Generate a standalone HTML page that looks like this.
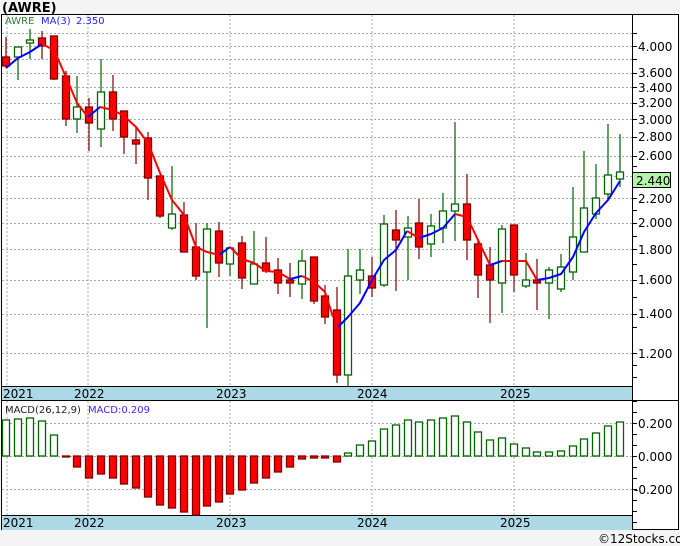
<!DOCTYPE html>
<html><head><meta charset="utf-8"><style>
html,body{margin:0;padding:0;background:#f4f4f4;}
svg{display:block;font-family:"DejaVu Sans","Liberation Sans",sans-serif;}
.g line{stroke:#006400;stroke-width:1.2}
.g rect{fill:#fff;stroke:#006400;stroke-width:1.3}
.r line{stroke:#800000;stroke-width:1.2}
.r rect{fill:#ff0000;stroke:#800000;stroke-width:1.3}
.grid{stroke:#aaa;stroke-width:1;stroke-dasharray:2,2}
.ax{font-size:12px;fill:#000}
</style></head><body>
<svg width="680" height="546" viewBox="0 0 680 546" xmlns="http://www.w3.org/2000/svg">
<rect x="0" y="0" width="680" height="546" fill="#f4f4f4"/>
<text x="2" y="12" font-size="13" font-weight="bold" fill="#000">(AWRE)</text>
<rect x="1.5" y="14.5" width="677" height="515" fill="#fff" stroke="#000"/>
<rect x="2" y="387" width="630" height="13" fill="#add8e6"/>
<rect x="2" y="515" width="630" height="15" fill="#add8e6"/>
<line x1="2" y1="386.5" x2="632" y2="386.5" stroke="#000"/>
<line x1="2" y1="400.5" x2="679" y2="400.5" stroke="#000"/>
<line x1="2" y1="515.5" x2="632" y2="515.5" stroke="#000"/>
<line x1="632.5" y1="14" x2="632.5" y2="530" stroke="#000"/>
<g class="ax"><text x="3" y="398">2021</text><text x="74" y="398">2022</text><text x="216" y="398">2023</text><text x="357" y="398">2024</text><text x="500" y="398">2025</text>
<text x="3" y="527">2021</text><text x="74" y="527">2022</text><text x="216" y="527">2023</text><text x="357" y="527">2024</text><text x="500" y="527">2025</text></g>
<g class="grid">
<line x1="7" y1="15" x2="7" y2="386"/><line x1="88" y1="15" x2="88" y2="386"/><line x1="230" y1="15" x2="230" y2="386"/><line x1="372" y1="15" x2="372" y2="386"/><line x1="514" y1="15" x2="514" y2="386"/>
<line x1="7" y1="401" x2="7" y2="515"/><line x1="88" y1="401" x2="88" y2="515"/><line x1="230" y1="401" x2="230" y2="515"/><line x1="372" y1="401" x2="372" y2="515"/><line x1="514" y1="401" x2="514" y2="515"/>
<line x1="2" y1="33.5" x2="632" y2="33.5"/><line x1="2" y1="46.5" x2="632" y2="46.5"/><line x1="2" y1="59.5" x2="632" y2="59.5"/><line x1="2" y1="73.5" x2="632" y2="73.5"/><line x1="2" y1="87.5" x2="632" y2="87.5"/><line x1="2" y1="103.5" x2="632" y2="103.5"/><line x1="2" y1="119.5" x2="632" y2="119.5"/><line x1="2" y1="137.5" x2="632" y2="137.5"/><line x1="2" y1="156.5" x2="632" y2="156.5"/><line x1="2" y1="176.5" x2="632" y2="176.5"/><line x1="2" y1="198.5" x2="632" y2="198.5"/><line x1="2" y1="223.5" x2="632" y2="223.5"/><line x1="2" y1="249.5" x2="632" y2="249.5"/><line x1="2" y1="280.5" x2="632" y2="280.5"/><line x1="2" y1="314.5" x2="632" y2="314.5"/><line x1="2" y1="353.5" x2="632" y2="353.5"/>
<line x1="2" y1="423.5" x2="632" y2="423.5"/><line x1="2" y1="456.5" x2="632" y2="456.5"/><line x1="2" y1="489.5" x2="632" y2="489.5"/>
</g>
<g stroke="#000">
<line x1="632" y1="33.5" x2="637" y2="33.5"/><line x1="632" y1="46.5" x2="637" y2="46.5"/><line x1="632" y1="59.5" x2="637" y2="59.5"/><line x1="632" y1="73.5" x2="637" y2="73.5"/><line x1="632" y1="87.5" x2="637" y2="87.5"/><line x1="632" y1="103.5" x2="637" y2="103.5"/><line x1="632" y1="119.5" x2="637" y2="119.5"/><line x1="632" y1="137.5" x2="637" y2="137.5"/><line x1="632" y1="156.5" x2="637" y2="156.5"/><line x1="632" y1="166.5" x2="637" y2="166.5"/><line x1="632" y1="187.5" x2="637" y2="187.5"/><line x1="632" y1="198.5" x2="637" y2="198.5"/><line x1="632" y1="210.5" x2="637" y2="210.5"/><line x1="632" y1="223.5" x2="637" y2="223.5"/><line x1="632" y1="236.5" x2="637" y2="236.5"/><line x1="632" y1="249.5" x2="637" y2="249.5"/><line x1="632" y1="264.5" x2="637" y2="264.5"/><line x1="632" y1="280.5" x2="637" y2="280.5"/><line x1="632" y1="297.5" x2="637" y2="297.5"/><line x1="632" y1="314.5" x2="637" y2="314.5"/><line x1="632" y1="327.5" x2="637" y2="327.5"/><line x1="632" y1="353.5" x2="637" y2="353.5"/><line x1="632" y1="365.5" x2="637" y2="365.5"/><line x1="632" y1="377.5" x2="637" y2="377.5"/>
<line x1="632" y1="401.5" x2="637" y2="401.5"/><line x1="632" y1="412.5" x2="637" y2="412.5"/><line x1="632" y1="423.5" x2="637" y2="423.5"/><line x1="632" y1="434.5" x2="637" y2="434.5"/><line x1="632" y1="445.5" x2="637" y2="445.5"/><line x1="632" y1="456.5" x2="637" y2="456.5"/><line x1="632" y1="467.5" x2="637" y2="467.5"/><line x1="632" y1="478.5" x2="637" y2="478.5"/><line x1="632" y1="489.5" x2="637" y2="489.5"/><line x1="632" y1="500.5" x2="637" y2="500.5"/><line x1="632" y1="511.5" x2="637" y2="511.5"/><line x1="632" y1="522.5" x2="637" y2="522.5"/>
</g>
<g class="ax">
<text x="638" y="51">4.000</text><text x="638" y="77">3.600</text><text x="638" y="92">3.400</text><text x="638" y="107">3.200</text><text x="638" y="124">3.000</text><text x="638" y="141">2.800</text><text x="638" y="160">2.600</text><text x="638" y="203">2.200</text><text x="638" y="227">2.000</text><text x="638" y="254">1.800</text><text x="638" y="284">1.600</text><text x="638" y="318">1.400</text><text x="638" y="358">1.200</text>
<text x="638" y="428">0.200</text><text x="638" y="461">0.000</text><text x="634" y="494">-0.200</text>
</g>
<rect x="632.5" y="172.5" width="38" height="15" fill="#b3f5a8" stroke="#000"/>
<text x="636" y="185" font-size="12" fill="#000">2.440</text>
<text x="5" y="24" font-size="10" fill="#2e7d32">AWRE</text>
<text x="41" y="24" font-size="10" fill="#2222ff">MA(3)</text>
<text x="76" y="24" font-size="10" fill="#2222ff">2.350</text>
<text x="5" y="413" font-size="10" fill="#222">MACD(26,12,9)</text>
<text x="88" y="413" font-size="10" fill="#4422ff">MACD:0.209</text>
<g class="r"><line x1="6" y1="37" x2="6" y2="68"/><rect x="2.5" y="57" width="7" height="9"/></g>
<g class="g"><line x1="18" y1="47" x2="18" y2="80"/><rect x="14.5" y="47" width="7" height="10"/></g>
<g class="g"><line x1="30" y1="29" x2="30" y2="59"/><rect x="26.5" y="40" width="7" height="3"/></g>
<g class="r"><line x1="42" y1="31" x2="42" y2="59"/><rect x="38.5" y="38" width="7" height="8"/></g>
<g class="r"><line x1="54" y1="36" x2="54" y2="80"/><rect x="50.5" y="36" width="7" height="43"/></g>
<g class="r"><line x1="66" y1="71" x2="66" y2="126"/><rect x="62.5" y="76" width="7" height="43"/></g>
<g class="g"><line x1="77" y1="76" x2="77" y2="133"/><rect x="73.5" y="107" width="7" height="12"/></g>
<g class="r"><line x1="89" y1="98" x2="89" y2="151"/><rect x="85.5" y="107" width="7" height="16"/></g>
<g class="g"><line x1="101" y1="59" x2="101" y2="147"/><rect x="97.5" y="92" width="7" height="37"/></g>
<g class="r"><line x1="113" y1="75" x2="113" y2="131"/><rect x="109.5" y="92" width="7" height="27"/></g>
<g class="r"><line x1="124" y1="111" x2="124" y2="154"/><rect x="120.5" y="111" width="7" height="26"/></g>
<g class="r"><line x1="136" y1="126" x2="136" y2="164"/><rect x="132.5" y="140" width="7" height="4"/></g>
<g class="r"><line x1="148" y1="132" x2="148" y2="200"/><rect x="144.5" y="138" width="7" height="40"/></g>
<g class="r"><line x1="160" y1="176" x2="160" y2="218"/><rect x="156.5" y="176" width="7" height="40"/></g>
<g class="g"><line x1="172" y1="166" x2="172" y2="230"/><rect x="168.5" y="214" width="7" height="14"/></g>
<g class="r"><line x1="184" y1="202" x2="184" y2="252"/><rect x="180.5" y="215" width="7" height="37"/></g>
<g class="r"><line x1="196" y1="223" x2="196" y2="280"/><rect x="192.5" y="247" width="7" height="29"/></g>
<g class="g"><line x1="207" y1="223" x2="207" y2="328"/><rect x="203.5" y="229" width="7" height="43"/></g>
<g class="r"><line x1="219" y1="222" x2="219" y2="277"/><rect x="215.5" y="231" width="7" height="32"/></g>
<g class="g"><line x1="230" y1="247" x2="230" y2="276"/><rect x="226.5" y="248" width="7" height="16"/></g>
<g class="r"><line x1="242" y1="236" x2="242" y2="289"/><rect x="238.5" y="243" width="7" height="35"/></g>
<g class="g"><line x1="254" y1="231" x2="254" y2="284"/><rect x="250.5" y="264" width="7" height="20"/></g>
<g class="r"><line x1="266" y1="237" x2="266" y2="273"/><rect x="262.5" y="263" width="7" height="8"/></g>
<g class="r"><line x1="278" y1="258" x2="278" y2="294"/><rect x="274.5" y="270" width="7" height="13"/></g>
<g class="r"><line x1="290" y1="263" x2="290" y2="297"/><rect x="286.5" y="280" width="7" height="3"/></g>
<g class="g"><line x1="302" y1="250" x2="302" y2="299"/><rect x="298.5" y="261" width="7" height="23"/></g>
<g class="r"><line x1="314" y1="257" x2="314" y2="304"/><rect x="310.5" y="257" width="7" height="44"/></g>
<g class="r"><line x1="325" y1="285" x2="325" y2="324"/><rect x="321.5" y="296" width="7" height="21"/></g>
<g class="r"><line x1="337" y1="287" x2="337" y2="383"/><rect x="333.5" y="310" width="7" height="65"/></g>
<g class="g"><line x1="348" y1="249" x2="348" y2="387"/><rect x="344.5" y="276" width="7" height="99"/></g>
<g class="g"><line x1="360" y1="249" x2="360" y2="294"/><rect x="356.5" y="270" width="7" height="10"/></g>
<g class="r"><line x1="372" y1="257" x2="372" y2="297"/><rect x="368.5" y="276" width="7" height="12"/></g>
<g class="g"><line x1="384" y1="215" x2="384" y2="287"/><rect x="380.5" y="224" width="7" height="61"/></g>
<g class="r"><line x1="396" y1="210" x2="396" y2="291"/><rect x="392.5" y="230" width="7" height="10"/></g>
<g class="g"><line x1="408" y1="216" x2="408" y2="280"/><rect x="404.5" y="228" width="7" height="9"/></g>
<g class="r"><line x1="419" y1="199" x2="419" y2="259"/><rect x="415.5" y="223" width="7" height="24"/></g>
<g class="g"><line x1="431" y1="214" x2="431" y2="257"/><rect x="427.5" y="226" width="7" height="18"/></g>
<g class="g"><line x1="443" y1="193" x2="443" y2="243"/><rect x="439.5" y="211" width="7" height="17"/></g>
<g class="g"><line x1="455" y1="122" x2="455" y2="241"/><rect x="451.5" y="204" width="7" height="7"/></g>
<g class="r"><line x1="467" y1="174" x2="467" y2="260"/><rect x="463.5" y="204" width="7" height="36"/></g>
<g class="r"><line x1="478" y1="239" x2="478" y2="298"/><rect x="474.5" y="244" width="7" height="31"/></g>
<g class="r"><line x1="490" y1="247" x2="490" y2="323"/><rect x="486.5" y="265" width="7" height="15"/></g>
<g class="g"><line x1="502" y1="225" x2="502" y2="313"/><rect x="498.5" y="229" width="7" height="54"/></g>
<g class="r"><line x1="514" y1="225" x2="514" y2="292"/><rect x="510.5" y="225" width="7" height="50"/></g>
<g class="g"><line x1="526" y1="253" x2="526" y2="288"/><rect x="522.5" y="280" width="7" height="6"/></g>
<g class="r"><line x1="537" y1="259" x2="537" y2="310"/><rect x="533.5" y="280" width="7" height="3"/></g>
<g class="g"><line x1="549" y1="267" x2="549" y2="319"/><rect x="545.5" y="270" width="7" height="13"/></g>
<g class="g"><line x1="561" y1="254" x2="561" y2="292"/><rect x="557.5" y="267" width="7" height="22"/></g>
<g class="g"><line x1="573" y1="187" x2="573" y2="280"/><rect x="569.5" y="237" width="7" height="35"/></g>
<g class="g"><line x1="584" y1="151" x2="584" y2="252"/><rect x="580.5" y="208" width="7" height="44"/></g>
<g class="g"><line x1="596" y1="164" x2="596" y2="219"/><rect x="592.5" y="198" width="7" height="16"/></g>
<g class="g"><line x1="608" y1="124" x2="608" y2="200"/><rect x="604.5" y="175" width="7" height="19"/></g>
<g class="g"><line x1="620" y1="134" x2="620" y2="187"/><rect x="616.5" y="172" width="7" height="7"/></g>
<g fill="none" stroke-width="2" stroke-linejoin="round">
<polyline stroke="#0000ff" points="6,68 18,58 30,52 42,44"/>
<polyline stroke="#ff0000" points="42,44 54,50 66,77 77,103 88,117"/>
<polyline stroke="#0000ff" points="88,117 100,107"/>
<polyline stroke="#ff0000" points="100,107 113,110 124,116 136,127 148,143 160,173 172,200 184,215 196,247 207,252 219,255"/>
<polyline stroke="#0000ff" points="219,255 230,247"/>
<polyline stroke="#ff0000" points="230,247 242,259 254,263 266,271 278,272 290,279"/>
<polyline stroke="#0000ff" points="290,279 302,276"/>
<polyline stroke="#ff0000" points="302,276 314,282 325,292 333,317"/>
<polyline stroke="#0000ff" points="338,327 348,317 360,303 372,280 384,260 396,250 407,231"/>
<polyline stroke="#ff0000" points="407,231 419,238"/>
<polyline stroke="#0000ff" points="419,238 431,234 443,228 455,214"/>
<polyline stroke="#ff0000" points="455,214 467,217 478,240 490,265"/>
<polyline stroke="#0000ff" points="490,265 502,261"/>
<polyline stroke="#ff0000" points="502,261 514,261 526,261 537,280"/>
<polyline stroke="#0000ff" points="537,280 549,278 561,274 573,257 584,232 596,213 608,200 620,181"/>
</g>
<g fill="#fff" stroke="#006400" stroke-width="1.3">
<rect x="2.5" y="420" width="7" height="36"/><rect x="14.5" y="419" width="7" height="37"/><rect x="26.5" y="418" width="7" height="38"/><rect x="38.5" y="421" width="7" height="35"/><rect x="50.5" y="435" width="7" height="21"/>
<rect x="344.5" y="453" width="7" height="3"/><rect x="356.5" y="445" width="7" height="11"/><rect x="368.5" y="441" width="7" height="15"/><rect x="380.5" y="429" width="7" height="27"/><rect x="392.5" y="425" width="7" height="31"/><rect x="404.5" y="420" width="7" height="36"/><rect x="415.5" y="422" width="7" height="34"/><rect x="427.5" y="420" width="7" height="36"/><rect x="439.5" y="418" width="7" height="38"/><rect x="451.5" y="416" width="7" height="40"/><rect x="463.5" y="422" width="7" height="34"/><rect x="474.5" y="432" width="7" height="24"/><rect x="486.5" y="440" width="7" height="16"/><rect x="498.5" y="438" width="7" height="18"/><rect x="510.5" y="444" width="7" height="12"/><rect x="522.5" y="448" width="7" height="8"/><rect x="533.5" y="452" width="7" height="4"/><rect x="545.5" y="452" width="7" height="4"/><rect x="557.5" y="451" width="7" height="5"/><rect x="569.5" y="446" width="7" height="10"/><rect x="580.5" y="439" width="7" height="17"/><rect x="592.5" y="433" width="7" height="23"/><rect x="604.5" y="426" width="7" height="30"/><rect x="616.5" y="422" width="7" height="34"/>
</g>
<g fill="#ff0000" stroke="#800000" stroke-width="1.3">
<rect x="62.5" y="456" width="7" height="1"/><rect x="73.5" y="456" width="7" height="11"/><rect x="85.5" y="456" width="7" height="22"/><rect x="97.5" y="456" width="7" height="18"/><rect x="109.5" y="456" width="7" height="22"/><rect x="120.5" y="456" width="7" height="28"/><rect x="132.5" y="456" width="7" height="32"/><rect x="144.5" y="456" width="7" height="41"/><rect x="156.5" y="456" width="7" height="49"/><rect x="168.5" y="456" width="7" height="52"/><rect x="180.5" y="456" width="7" height="56"/><rect x="192.5" y="456" width="7" height="59"/><rect x="203.5" y="456" width="7" height="50"/><rect x="215.5" y="456" width="7" height="46"/><rect x="226.5" y="456" width="7" height="38"/><rect x="238.5" y="456" width="7" height="34"/><rect x="250.5" y="456" width="7" height="27"/><rect x="262.5" y="456" width="7" height="22"/><rect x="274.5" y="456" width="7" height="16"/><rect x="286.5" y="456" width="7" height="11"/><rect x="298.5" y="456" width="7" height="3"/><rect x="310.5" y="456" width="7" height="2"/><rect x="321.5" y="456" width="7" height="2"/><rect x="333.5" y="456" width="7" height="6"/>
</g>
<text x="598" y="543" font-size="12" fill="#000">©12Stocks.com</text>
</svg>
</body></html>
